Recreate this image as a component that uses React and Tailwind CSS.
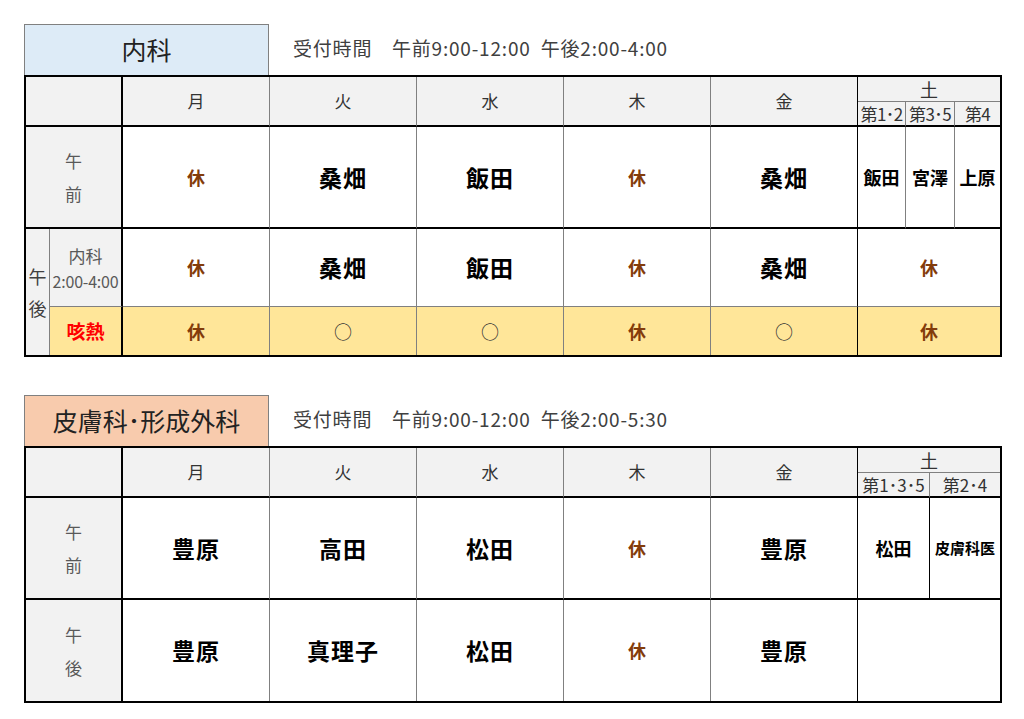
import React from "react";

const F = { fontFamily: '"Noto Sans CJK JP", "Noto Sans", sans-serif' };

const G = "border-[#808080]";

function Off() {
  return <span className="text-[18px] font-bold text-[#833c0b]">休</span>;
}
function Name({ children }) {
  return <span className="text-[23px] font-bold text-black tracking-[1px]">{children}</span>;
}
function SatName({ children }) {
  return <span className="text-[18px] font-bold text-black">{children}</span>;
}
function Circle() {
  return <span className="text-[18px] text-[#333]">○</span>;
}

const C = "flex items-center justify-center";

function Title({ bg, children, hours }) {
  return (
    <div className="flex items-end">
      <div
        className={`w-[245px] h-[51px] ${C} border border-b-0 border-[#808080] text-[25px] text-[#222] ${bg}`}
      >
        {children}
      </div>
      <div className="ml-[24px] mb-[13px] text-[19px] tracking-[0.8px] text-[#404040] whitespace-pre">{hours}</div>
    </div>
  );
}

function TopTable() {
  const hd = `bg-[#f2f2f2] text-[17px] text-[#333] ${C}`;
  const sub = `bg-[#f2f2f2] text-[17px] text-[#333] ${C} whitespace-nowrap tracking-[-0.6px]`;
  return (
    <div className="border-2 border-black w-[978px]">
      <div className="grid grid-cols-[24px_73px_147px_147px_147px_147px_147px_48px_49px_45px] grid-rows-[25px_25px_102px_78px_48px]">
        {/* header */}
        <div className={`col-start-1 col-span-2 row-start-1 row-span-2 bg-[#f2f2f2] border-r-2 border-b-2 border-black`} />
        {["月", "火", "水", "木", "金"].map((d, i) => (
          <div
            key={d}
            className={`row-start-1 row-span-2 ${hd} border-b-2 border-b-black border-r ${i === 4 ? "border-r-black" : "border-r-[#808080]"}`}
            style={{ gridColumnStart: i + 3 }}
          >
            {d}
          </div>
        ))}
        <div className={`col-start-8 col-span-3 row-start-1 ${hd} text-[18px] border-b ${G}`}>土</div>
        <div className={`col-start-8 row-start-2 ${sub} border-r ${G} border-b-2 border-b-black`}>第1･2</div>
        <div className={`col-start-9 row-start-2 ${sub} border-r ${G} border-b-2 border-b-black`}>第3･5</div>
        <div className={`col-start-10 row-start-2 ${sub} border-b-2 border-b-black`}>第4</div>

        {/* 午前 */}
        <div className={`col-start-1 col-span-2 row-start-3 bg-[#f2f2f2] border-r-2 border-b-2 border-black flex flex-col items-center justify-center gap-[8px] text-[17px] text-[#595959] leading-[25px]`}>
          <span>午</span>
          <span>前</span>
        </div>
        {[<Off />, <Name>桑畑</Name>, <Name>飯田</Name>, <Off />, <Name>桑畑</Name>].map((el, i) => (
          <div
            key={i}
            className={`row-start-3 bg-white ${C} border-b-2 border-b-black border-r ${i === 4 ? "border-r-black" : "border-r-[#808080]"}`}
            style={{ gridColumnStart: i + 3 }}
          >
            {el}
          </div>
        ))}
        <div className={`col-start-8 row-start-3 ${C} border-r ${G} border-b-2 border-b-black`}><SatName>飯田</SatName></div>
        <div className={`col-start-9 row-start-3 ${C} border-r ${G} border-b-2 border-b-black`}><SatName>宮澤</SatName></div>
        <div className={`col-start-10 row-start-3 ${C} border-b-2 border-b-black`}><SatName>上原</SatName></div>

        {/* 午後 内科 */}
        <div className={`col-start-1 row-start-4 row-span-2 bg-[#f2f2f2] border-r ${G} flex flex-col items-center justify-center gap-[7px] text-[18px] text-[#404040] leading-[25px]`}>
          <span>午</span>
          <span>後</span>
        </div>
        <div className={`col-start-2 row-start-4 bg-[#f2f2f2] border-r-2 border-r-black border-b ${G} flex flex-col items-center justify-center text-[#595959]`}>
          <span className="text-[17px] leading-[26px]">内科</span>
          <span className="text-[16px] leading-[24px] whitespace-nowrap tracking-[-0.2px]">2:00-4:00</span>
        </div>
        {[<Off />, <Name>桑畑</Name>, <Name>飯田</Name>, <Off />, <Name>桑畑</Name>].map((el, i) => (
          <div
            key={i}
            className={`row-start-4 bg-white ${C} border-b border-b-[#808080] border-r ${i === 4 ? "border-r-black" : "border-r-[#808080]"}`}
            style={{ gridColumnStart: i + 3 }}
          >
            {el}
          </div>
        ))}
        <div className={`col-start-8 col-span-3 row-start-4 ${C} border-b ${G}`}><Off /></div>

        {/* 咳熱 */}
        <div className={`col-start-2 row-start-5 bg-[#ffe699] border-r-2 border-r-black ${C}`}>
          <span className="text-[19px] font-bold text-[#ff0000]">咳熱</span>
        </div>
        {[<Off />, <Circle />, <Circle />, <Off />, <Circle />].map((el, i) => (
          <div
            key={i}
            className={`row-start-5 bg-[#ffe699] ${C} border-r ${i === 4 ? "border-r-black" : "border-r-[#808080]"}`}
            style={{ gridColumnStart: i + 3 }}
          >
            {el}
          </div>
        ))}
        <div className={`col-start-8 col-span-3 row-start-5 bg-[#ffe699] ${C}`}><Off /></div>
      </div>
    </div>
  );
}

function BottomTable() {
  const hd = `bg-[#f2f2f2] text-[17px] text-[#333] ${C}`;
  const sub = `bg-[#f2f2f2] text-[17px] text-[#333] ${C} whitespace-nowrap`;
  const am = [<Name>豊原</Name>, <Name>高田</Name>, <Name>松田</Name>, <Off />, <Name>豊原</Name>];
  const pm = [<Name>豊原</Name>, <Name>真理子</Name>, <Name>松田</Name>, <Off />, <Name>豊原</Name>];
  return (
    <div className="border-2 border-black w-[978px]">
      <div className="grid grid-cols-[97px_147px_147px_147px_147px_147px_72px_70px] grid-rows-[25px_25px_102px_101px]">
        <div className="col-start-1 row-start-1 row-span-2 bg-[#f2f2f2] border-r-2 border-b-2 border-black" />
        {["月", "火", "水", "木", "金"].map((d, i) => (
          <div
            key={d}
            className={`row-start-1 row-span-2 ${hd} border-b-2 border-b-black border-r ${i === 4 ? "border-r-black" : "border-r-[#808080]"}`}
            style={{ gridColumnStart: i + 2 }}
          >
            {d}
          </div>
        ))}
        <div className={`col-start-7 col-span-2 row-start-1 ${hd} text-[18px] border-b ${G}`}>土</div>
        <div className={`col-start-7 row-start-2 ${sub} border-r ${G} border-b-2 border-b-black`}>第1･3･5</div>
        <div className={`col-start-8 row-start-2 ${sub} border-b-2 border-b-black`}>第2･4</div>

        <div className="col-start-1 row-start-3 bg-[#f2f2f2] border-r-2 border-b-2 border-black flex flex-col items-center justify-center gap-[8px] text-[17px] text-[#595959] leading-[25px]">
          <span>午</span>
          <span>前</span>
        </div>
        {am.map((el, i) => (
          <div
            key={i}
            className={`row-start-3 ${C} border-b-2 border-b-black border-r ${i === 4 ? "border-r-black" : "border-r-[#808080]"}`}
            style={{ gridColumnStart: i + 2 }}
          >
            {el}
          </div>
        ))}
        <div className={`col-start-7 row-start-3 ${C} border-r border-r-black border-b-2 border-b-black`}><SatName>松田</SatName></div>
        <div className={`col-start-8 row-start-3 ${C} border-b-2 border-b-black`}>
          <span className="text-[15px] font-bold text-black">皮膚科医</span>
        </div>

        <div className="col-start-1 row-start-4 bg-[#f2f2f2] border-r-2 border-black flex flex-col items-center justify-center gap-[8px] text-[17px] text-[#595959] leading-[25px]">
          <span>午</span>
          <span>後</span>
        </div>
        {pm.map((el, i) => (
          <div
            key={i}
            className={`row-start-4 ${C} border-r ${i === 4 ? "border-r-black" : "border-r-[#808080]"}`}
            style={{ gridColumnStart: i + 2 }}
          >
            {el}
          </div>
        ))}
        <div className="col-start-7 col-span-2 row-start-4" />
      </div>
    </div>
  );
}

export default function App() {
  return (
    <div className="w-[1024px] h-[719px] bg-white pl-[24px] pt-[24px]" style={F}>
      <Title bg="bg-[#ddebf7]" hours={"受付時間\u3000午前9:00-12:00  午後2:00-4:00"}>
        内科
      </Title>
      <TopTable />
      <div className="h-[38px]" />
      <Title bg="bg-[#f8cbad]" hours={"受付時間\u3000午前9:00-12:00  午後2:00-5:30"}>
        皮膚科･形成外科
      </Title>
      <BottomTable />
    </div>
  );
}
